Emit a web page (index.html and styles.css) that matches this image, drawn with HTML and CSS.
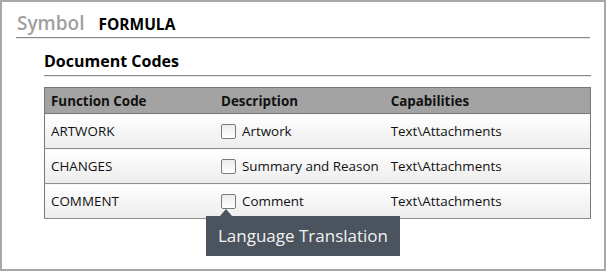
FILE: index.html
```html
<!DOCTYPE html>
<html>
  <head>
    <meta charset="UTF-8">
    <link rel="stylesheet" href="styles.css">
    <title>Symbol FORMULA</title>
  </head>
  <body>
    <div class="frame">
      <div class="symbol">
        <span class="symbol-label">Symbol</span>
        <span class="symbol-name">FORMULA</span>
      </div>
      <div class="section">
        <h2 class="section-title">Document Codes</h2>
        <table class="codes">
          <thead>
            <tr>
              <th class="col-code">Function Code</th>
              <th class="col-desc">Description</th>
              <th>Capabilities</th>
            </tr>
          </thead>
          <tbody>
            <tr>
              <td>ARTWORK</td>
              <td><span class="check"></span>Artwork</td>
              <td>Text\Attachments</td>
            </tr>
            <tr>
              <td>CHANGES</td>
              <td><span class="check"></span>Summary and Reason</td>
              <td>Text\Attachments</td>
            </tr>
            <tr>
              <td>COMMENT</td>
              <td class="has-tip">
                <span class="check"></span>Comment
                <div class="tooltip">Language Translation</div>
              </td>
              <td>Text\Attachments</td>
            </tr>
          </tbody>
        </table>
      </div>
    </div>
  </body>
</html>
```

FILE: styles.css
```css
body {
  margin: 0;
  font-family: 'Open Sans', sans-serif;
  background: #ffffff;
}

.frame {
  width: 602px;
  height: 267px;
  border: 2px solid #a8a8a8;
  background: #ffffff;
  padding: 0;
}

.symbol {
  margin: 10px 14px 0 14px;
  padding-bottom: 3px;
  border-bottom: 1px solid #8a8a8a;
  box-shadow: 0 1px 0 #e6e6e6;
  height: 22px;
  display: flex;
  align-items: baseline;
}

.symbol-label {
  color: #a0a0a0;
  font-size: 19px;
  font-weight: 600;
  line-height: 22px;
  margin-left: 1px;
}

.symbol-name {
  color: #000000;
  font-size: 15.5px;
  font-weight: 700;
  margin-left: 14px;
}

.section {
  margin: 0 13px 0 42px;
}

.section-title {
  margin: 13px 0 0 0;
  font-size: 16px;
  font-weight: 700;
  height: 24px;
  line-height: 20px;
  border-bottom: 1px solid #8a8a8a;
  box-shadow: 0 1px 0 #e6e6e6;
}

.codes {
  margin-top: 11px;
  width: 100%;
  border-collapse: collapse;
  border: 1px solid #777777;
  font-size: 13.4px;
}

.codes th {
  background: #a3a3a3;
  color: #111111;
  text-align: left;
  font-weight: 700;
  height: 25px;
  padding: 0 6px;
  border-bottom: 1px solid #7a7a7a;
}

.col-code {
  width: 158px;
}

.col-desc {
  width: 157px;
}

.codes td {
  height: 34px;
  padding: 0 6px;
  color: #111111;
  background: linear-gradient(#ffffff, #ececec);
  border-bottom: 1px solid #8c8c8c;
  white-space: nowrap;
}

.check {
  display: inline-block;
  width: 13px;
  height: 13px;
  border: 1px solid #7a7a7a;
  border-radius: 2px;
  background: linear-gradient(#ececec, #ffffff);
  vertical-align: -3px;
  margin-right: 6px;
}

.has-tip {
  position: relative;
}

.tooltip {
  position: absolute;
  left: -9px;
  top: 32px;
  width: 194px;
  height: 40px;
  line-height: 40px;
  background: #4b535e;
  color: #f2f2f2;
  font-size: 17px;
  text-align: center;
  z-index: 2;
}

.tooltip::before {
  content: "";
  position: absolute;
  left: 14px;
  top: -7px;
  border-left: 6px solid transparent;
  border-right: 6px solid transparent;
  border-bottom: 7px solid #4b535e;
}
```
